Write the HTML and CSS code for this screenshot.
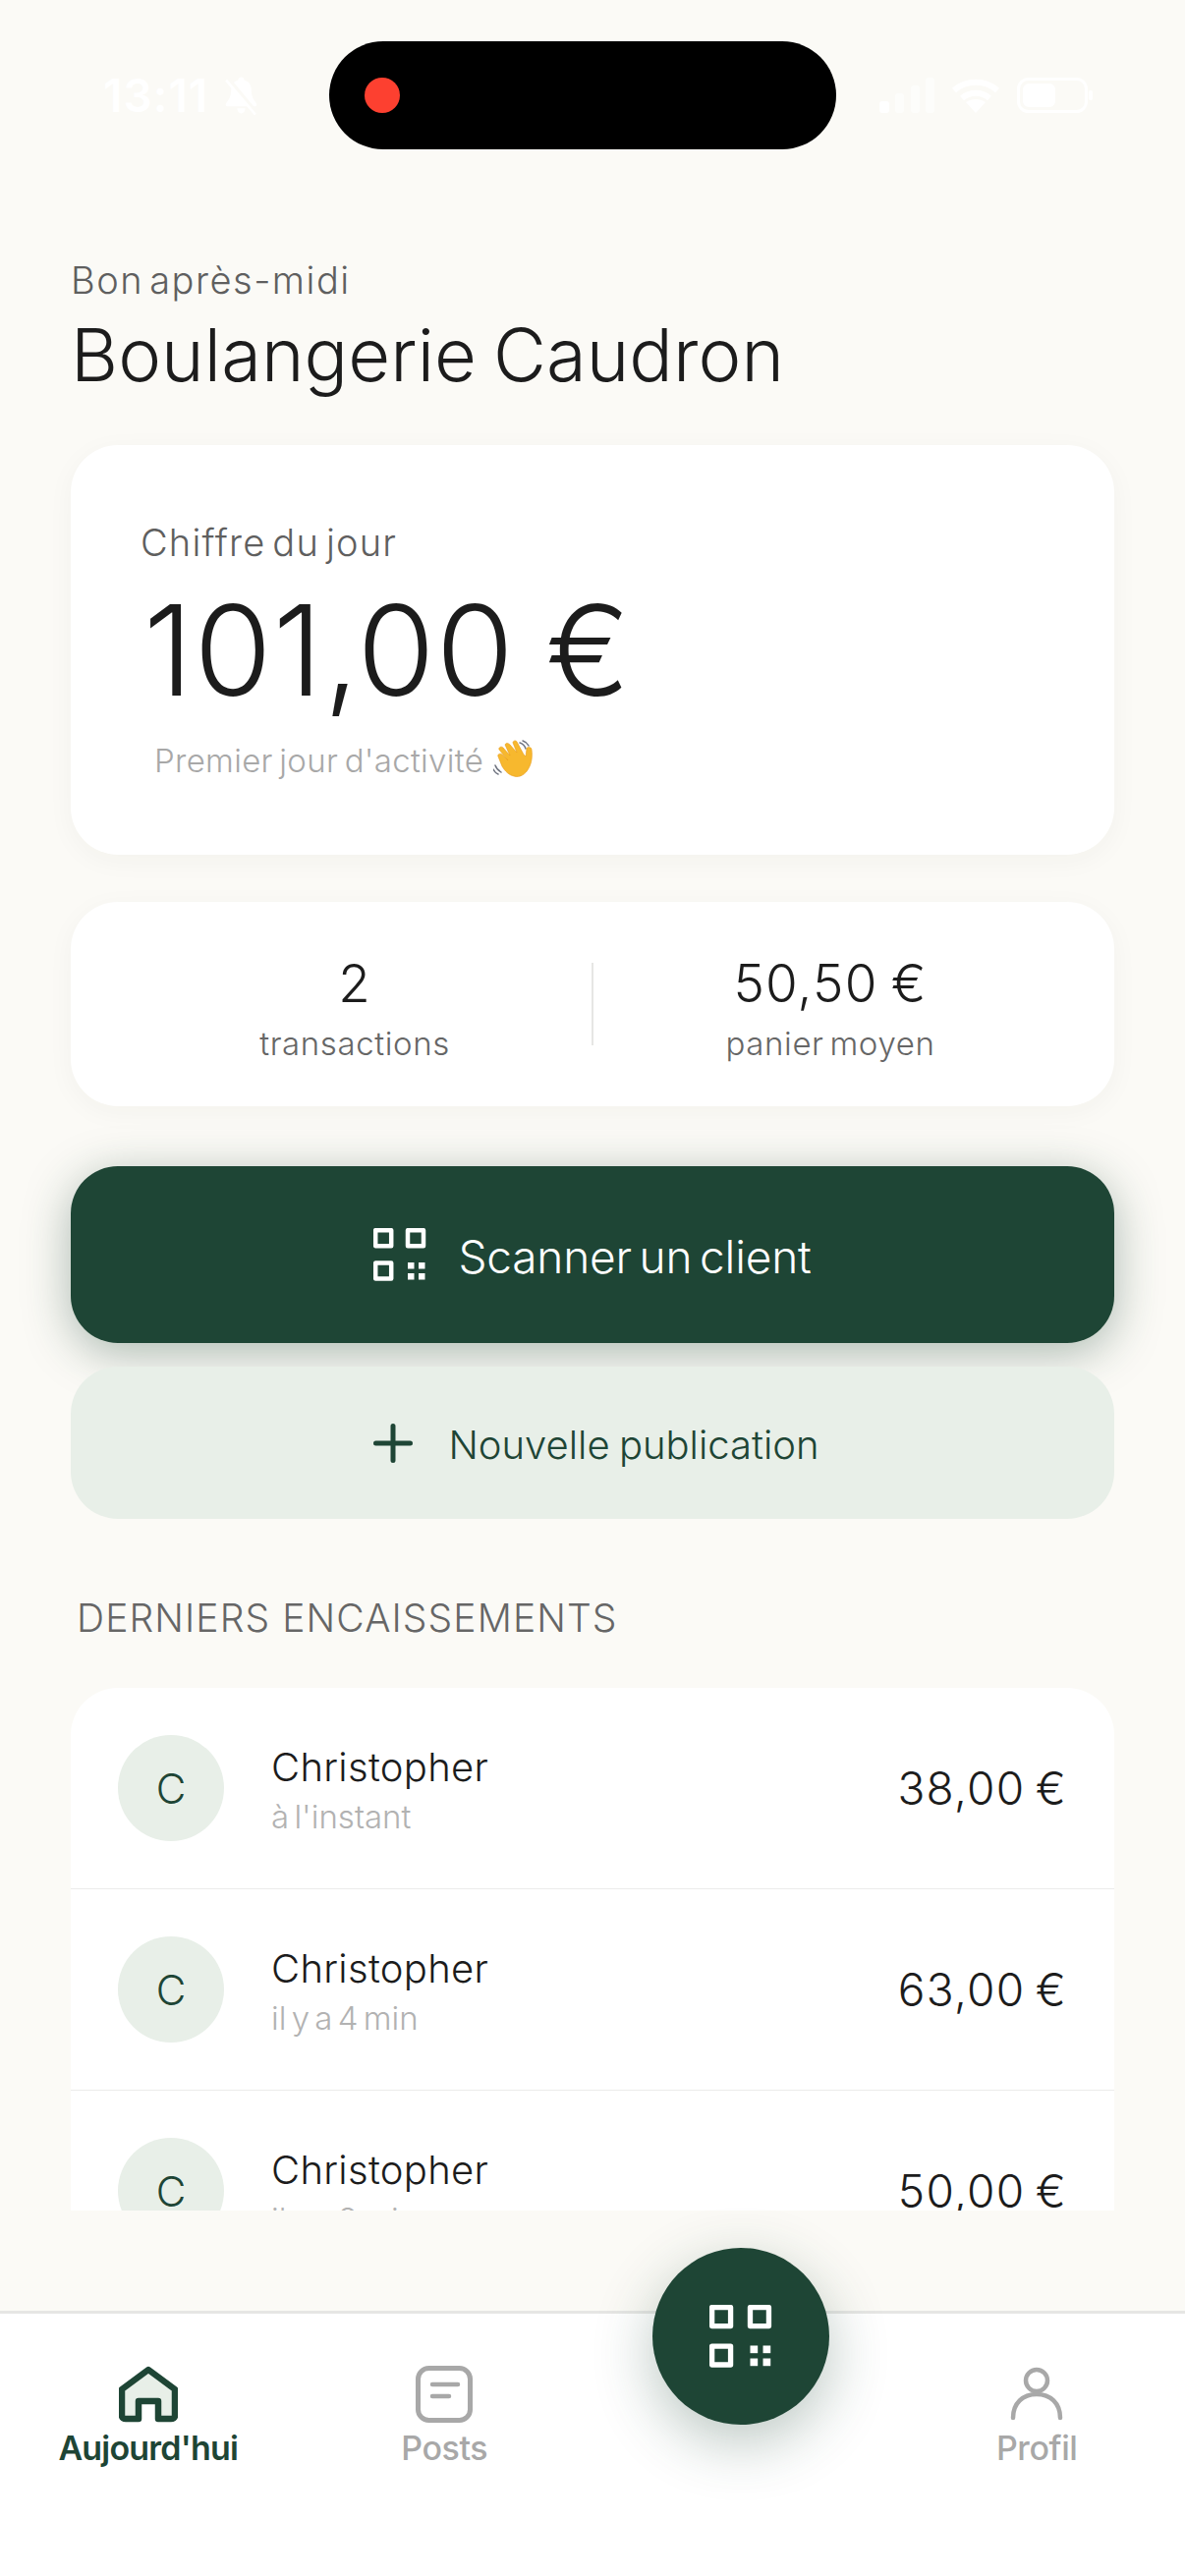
FILE: index.html
```html
<!DOCTYPE html>
<html lang="fr">
<head>
  <meta charset="UTF-8">
  <title>Boulangerie Caudron</title>
  <link rel="stylesheet" href="styles.css">
</head>
<body>
  <svg class="defs" width="0" height="0">
    <symbol id="qr" viewBox="0 0 54 54">
      <g fill="none" stroke="currentColor" stroke-width="4.5" stroke-linejoin="round">
        <rect x="2.2" y="2.2" width="16" height="16"/>
        <rect x="35" y="2.2" width="16" height="16"/>
        <rect x="2.2" y="35.5" width="16" height="16"/>
      </g>
      <g fill="currentColor">
        <rect x="35" y="35" width="6.5" height="6.5"/>
        <rect x="46" y="35" width="6.5" height="6.5"/>
        <rect x="35" y="46" width="6.5" height="6.5"/>
        <rect x="46" y="46" width="6.5" height="6.5"/>
      </g>
    </symbol>
  </svg>

  <div class="app">
    <div class="content">

      <div class="status">
        <div class="status-left">
          <span class="clock">13:11</span>
          <svg class="bell" width="39" height="40" viewBox="0 0 38 38">
            <path fill="#fff" d="M19 1c2 0 3 1.500 3 3 5 1.500 7 5 7 10 0 6 2 9 5 13 1 2 0 3-2 3H6c-2 0-3-1-2-3 3-4 5-7 5-13 0-5 2-8.500 7-10 0-1.500 1-3 3-3zM15 32h8c0 3-2 5-4 5s-4-2-4-5z"/>
            <path stroke="#fbfaf6" stroke-width="5" d="M5 2l28 34"/>
            <path stroke="#fff" stroke-width="2.500" d="M4 4l29 34"/>
          </svg>
        </div>
        <div class="island"><span class="rec-dot"></span></div>
        <div class="status-right">
          <svg width="56" height="36" viewBox="0 0 56 36" fill="#fff">
            <rect x="0" y="24" width="10" height="12" rx="3"/>
            <rect x="16" y="16" width="9" height="20" rx="3" opacity=".6"/>
            <rect x="32" y="8" width="9" height="28" rx="3" opacity=".6"/>
            <rect x="47" y="0" width="9" height="36" rx="3" opacity=".6"/>
          </svg>
          <svg width="48" height="36" viewBox="0 0 48 36" fill="none" stroke="#fff" stroke-width="6">
            <path d="M2 13c12-11 32-11 44 0"/>
            <path d="M10 21c8-7 20-7 28 0"/>
            <path fill="#fff" stroke="none" d="M14 25c6-4 14-4 20 0l-10 11z"/>
          </svg>
          <svg width="78" height="36" viewBox="0 0 78 36" fill="none">
            <rect x="1.500" y="1.500" width="69" height="33" rx="10" stroke="#fff" stroke-width="3"/>
            <rect x="6" y="6" width="33" height="24" rx="6" fill="#fff"/>
            <rect x="73" y="13" width="4" height="10" rx="2" fill="#fff"/>
          </svg>
        </div>
      </div>

      <div class="greeting">Bon après-midi</div>
      <h1 class="shop-name">Boulangerie Caudron</h1>

      <div class="card day-card">
        <div class="day-label">Chiffre du jour</div>
        <div class="day-total">101,00 €</div>
        <div class="day-note">
          Premier jour d'activité
          <svg class="wave" width="44" height="42" viewBox="0 0 44 42">
            <g fill="none" stroke="#6f7480" stroke-width="1.500" stroke-linecap="round">
              <path d="M27 3c3 1 5 3 6 6"/>
              <path d="M30 1c3 1 5 3 6 5"/>
              <path d="M2 26c1 3 3 5 6 7"/>
              <path d="M0 30c1 2 2 4 5 5"/>
            </g>
            <path fill="#f7b82e" stroke="#e79a1a" stroke-width=".6" d="M12 5c1-2 3-2 5 0l7 8-4-10c0-2 3-3 4-1l7 13 2 2 1-8c0-2 5-2 5 1 1 7 0 14-3 19-3 6-9 10-15 8-5-1-9-5-12-10L5 17c-1-2 2-4 4-2l6 6-9-11c-1-2 2-4 4-2l7 8z"/>
          </svg>
        </div>
      </div>

      <div class="card stats-card">
        <div class="stat">
          <div class="stat-value">2</div>
          <div class="stat-label">transactions</div>
        </div>
        <div class="stat-sep"></div>
        <div class="stat">
          <div class="stat-value">50,50 €</div>
          <div class="stat-label">panier moyen</div>
        </div>
      </div>

      <div class="btn btn-scan">
        <svg width="54" height="54"><use href="#qr"/></svg>
        <span>Scanner un client</span>
      </div>
      <div class="btn btn-new">
        <svg width="40" height="40" viewBox="0 0 40 40" fill="none" stroke="currentColor" stroke-width="5" stroke-linecap="round">
          <path d="M20 2.500v35M2.500 20h35"/>
        </svg>
        <span>Nouvelle publication</span>
      </div>

      <div class="section-title">DERNIERS ENCAISSEMENTS</div>

      <div class="tx-list">
        <div class="tx-row">
          <div class="avatar">C</div>
          <div class="tx-info">
            <div class="tx-name">Christopher</div>
            <div class="tx-when">à l'instant</div>
          </div>
          <div class="tx-amount">38,00 €</div>
        </div>
        <div class="tx-row">
          <div class="avatar">C</div>
          <div class="tx-info">
            <div class="tx-name">Christopher</div>
            <div class="tx-when">il y a 4 min</div>
          </div>
          <div class="tx-amount">63,00 €</div>
        </div>
        <div class="tx-row">
          <div class="avatar">C</div>
          <div class="tx-info">
            <div class="tx-name">Christopher</div>
            <div class="tx-when">il y a 8 min</div>
          </div>
          <div class="tx-amount">50,00 €</div>
        </div>
      </div>

    </div>

    <nav class="tabbar">
      <div class="tab tab-active">
        <svg width="60" height="58" viewBox="0 0 60 58">
          <path fill="#e8efe8" stroke="#1e4535" stroke-width="6.500" stroke-linejoin="round" d="M20 54V36h20v18h13c2 0 4-1 4-3V24L30 4 3 24v27c0 2 2 3 4 3z"/>
        </svg>
        <span>Aujourd'hui</span>
      </div>
      <div class="tab">
        <svg width="58" height="58" viewBox="0 0 58 58" fill="none" stroke="#a8a8a8">
          <rect x="2.500" y="2.500" width="53" height="53" rx="11" stroke-width="5"/>
          <path stroke-width="4.500" stroke-linecap="round" d="M17 19h26M17 31h17"/>
        </svg>
        <span>Posts</span>
      </div>
      <div class="tab tab-empty"></div>
      <div class="tab">
        <svg width="58" height="58" viewBox="0 0 58 58" fill="none" stroke="#a8a8a8" stroke-width="4.500" stroke-linecap="round">
          <circle cx="29" cy="15" r="11"/>
          <path d="M5 53c0-15 10-24 24-24s24 9 24 24"/>
        </svg>
        <span>Profil</span>
      </div>
      <div class="fab">
        <svg width="64" height="64"><use href="#qr"/></svg>
      </div>
    </nav>
  </div>
</body>
</html>
```

FILE: styles.css
```css
* {
  box-sizing: border-box;
}

html, body {
  margin: 0;
  padding: 0;
}

body {
  font-family: "Inter", "Liberation Sans", sans-serif;
  font-weight: 300;
  background: #fbfaf6;
  color: #1c1c1c;
}

.defs {
  position: absolute;
}

.app {
  width: 1206px;
  height: 2622px;
  display: flex;
  flex-direction: column;
  overflow: hidden;
}

.content {
  flex: 1;
  min-height: 0;
  overflow: hidden;
  padding: 42px 72px 0;
  margin-bottom: 102px;
}

/* status bar */
.status {
  height: 110px;
  margin: 0 -72px;
  padding: 0 93px 0 105px;
  display: flex;
  align-items: center;
}

.status-left {
  display: flex;
  align-items: center;
  gap: 14px;
  width: 230px;
}

.clock {
  color: #fff;
  font-size: 46px;
  font-weight: 600;
  letter-spacing: 1px;
}

.status-right {
  display: flex;
  align-items: center;
  gap: 18px;
  margin-left: auto;
}

.island {
  width: 516px;
  height: 110px;
  background: #000;
  border-radius: 55px;
  display: flex;
  align-items: center;
  padding-left: 36px;
}

.rec-dot {
  width: 36px;
  height: 36px;
  border-radius: 50%;
  background: #fd4030;
}

/* header */
.greeting {
  margin-top: 109px;
  font-size: 38px;
  line-height: 48px;
  color: #5f5f5f;
  letter-spacing: 1.5px;
  word-spacing: -6px;
}

.shop-name {
  margin: 7px 0 0;
  font-size: 74px;
  line-height: 90px;
  font-weight: 300;
  letter-spacing: 0.1px;
  word-spacing: -4px;
}

.card {
  background: #fff;
  border-radius: 48px;
  box-shadow: 0 6px 28px rgba(40, 40, 30, 0.04);
}

.day-card {
  margin-top: 47px;
  height: 417px;
  padding: 75px 74px 0;
}

.day-label {
  margin-left: -3px;
  font-size: 38px;
  line-height: 48px;
  color: #5f5f5f;
  letter-spacing: 1.2px;
  word-spacing: -5px;
}

.day-total {
  margin-top: 11px;
  font-size: 128px;
  line-height: 150px;
  font-weight: 300;
  letter-spacing: 1.200px;
  word-spacing: -6px;
}

.day-note {
  margin: 15px 0 0 11px;
  display: flex;
  align-items: center;
  gap: 10px;
  font-size: 33px;
  line-height: 44px;
  color: #a8a8a8;
  letter-spacing: 0.3px;
  word-spacing: -3px;
}

.stats-card {
  margin-top: 48px;
  height: 208px;
  padding: 0 48px;
  display: flex;
  align-items: center;
}

.stat {
  flex: 1;
  text-align: center;
  padding-top: 7px;
}

.stat-value {
  font-size: 53px;
  line-height: 64px;
  letter-spacing: 1.2px;
  word-spacing: -3px;
}

.stat-label {
  margin-top: 8px;
  font-size: 33px;
  line-height: 42px;
  color: #666;
  letter-spacing: 0.6px;
  word-spacing: -4px;
}

.stat-sep {
  width: 2px;
  height: 84px;
  background: #e6e6e4;
}

/* buttons */
.btn {
  display: flex;
  align-items: center;
  justify-content: center;
  border-radius: 48px;
}

.btn span {
  padding-top: 3px;
}

.btn-scan {
  margin-top: 61px;
  height: 180px;
  gap: 32px;
  background: #1e4535;
  color: #fff;
  font-size: 46px;
  letter-spacing: -0.2px;
  word-spacing: -5px;
  box-shadow: 0 10px 48px rgba(30, 69, 53, 0.36);
}

.btn-new {
  margin-top: 24px;
  height: 155px;
  gap: 36px;
  padding-left: 8px;
  background: #e8efe8;
  color: #1e4535;
  font-size: 40px;
  word-spacing: -2px;
}

.section-title {
  margin: 77px 0 0 6px;
  font-size: 39px;
  line-height: 48px;
  color: #666;
  letter-spacing: 1.1px;
}

/* list */
.tx-list {
  margin-top: 47px;
  background: #fff;
  border-radius: 48px 48px 0 0;
  overflow: hidden;
}

.tx-row {
  display: flex;
  align-items: center;
  height: 205px;
  padding: 0 48px 0 48px;
  border-bottom: 1px solid #ececea;
}

.avatar {
  flex: none;
  width: 108px;
  height: 108px;
  border-radius: 50%;
  background: #e8efe8;
  color: #1e4535;
  font-size: 42px;
  display: flex;
  align-items: center;
  justify-content: center;
}

.tx-info {
  flex: 1;
  margin-left: 48px;
  padding-top: 5px;
}

.tx-name {
  font-size: 40px;
  line-height: 50px;
  letter-spacing: 0.3px;
}

.tx-when {
  margin-top: 3px;
  font-size: 33px;
  line-height: 44px;
  color: #b2b2b2;
  word-spacing: -4px;
}

.tx-amount {
  font-size: 46px;
  letter-spacing: 1.3px;
  word-spacing: -4px;
}

/* bottom nav */
.tabbar {
  flex: none;
  position: relative;
  height: 270px;
  background: #fff;
  border-top: 3px solid #e6e6e4;
  display: grid;
  grid-template-columns: repeat(4, 1fr);
  padding-top: 53px;
}

.tab {
  display: flex;
  flex-direction: column;
  align-items: center;
  font-size: 34px;
  font-weight: 500;
  line-height: 42px;
  color: #a8a8a8;
  letter-spacing: -0.4px;
}

.tab-active {
  color: #1e4535;
  font-weight: 600;
  letter-spacing: -0.8px;
}

.tab span {
  margin-top: 5px;
}

.fab {
  position: absolute;
  left: 664px;
  top: -67px;
  width: 180px;
  height: 180px;
  border-radius: 50%;
  background: #1e4535;
  color: #fff;
  display: flex;
  align-items: center;
  justify-content: center;
  box-shadow: 0 18px 60px rgba(30, 69, 53, 0.3);
}
```
